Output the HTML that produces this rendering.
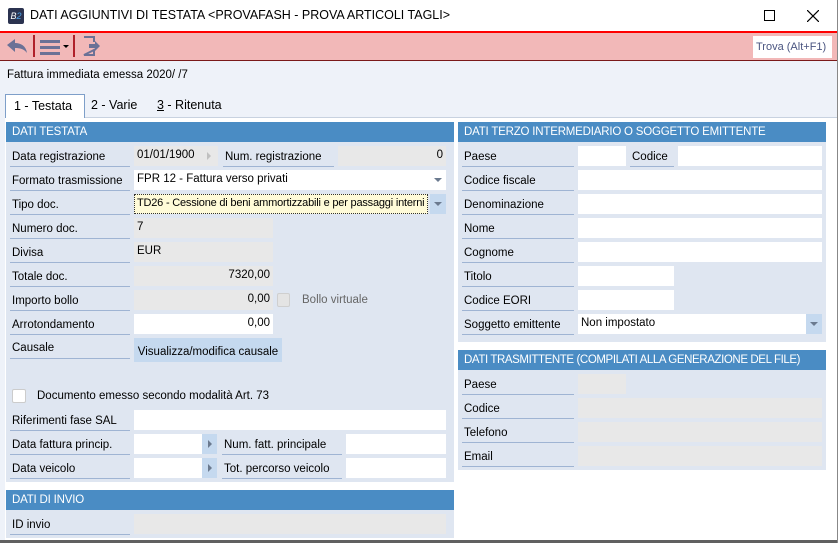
<!DOCTYPE html>
<html><head><meta charset="utf-8"><style>
*{box-sizing:border-box;margin:0;padding:0}
body{width:838px;height:543px;overflow:hidden;background:#eef2f9;font-family:"Liberation Sans",sans-serif;font-size:11.5px;color:#000;position:relative;white-space:nowrap}
.a{position:absolute}
.lbl{position:absolute;height:21px;line-height:23px;padding-left:2px;border-bottom:1px solid #9fb4d3;white-space:nowrap;overflow:hidden}
.f{position:absolute;height:20px;line-height:19px;padding:0 3px;white-space:nowrap;background:#fff;overflow:hidden}
.g{background:#e8e8e8}
.r{text-align:right}
.btn{position:absolute;height:20px;width:16px;background:#c5d9ef}
.btn:after{content:"";position:absolute;left:4px;top:8px;border-left:4px solid transparent;border-right:4px solid transparent;border-top:4px solid #6b7a8f}
.arr{position:absolute;height:20px;width:15px;background:#c5d9ef}
.arr:after{content:"";position:absolute;left:6px;top:6px;border-top:4px solid transparent;border-bottom:4px solid transparent;border-left:4px solid #6b7a8f}
.hdr{position:absolute;height:20px;background:#4a8cc4;color:#fff;line-height:21px;padding-left:6px;white-space:nowrap;overflow:hidden;letter-spacing:-0.2px}
.pan{position:absolute;background:#dfe6f1}
</style></head><body>
<div class="a" style="left:0;top:0;width:838px;height:31px;background:#fff"></div>
<div class="a" style="left:8px;top:8px;width:16px;height:16px;background:#2b3350;border-radius:2px;color:#fff;font-size:9px;line-height:16px;text-align:center;font-style:italic">B<span style="color:#4fa3e8">2</span></div>
<div class="a" style="left:30px;top:8px;font-size:12.5px">DATI AGGIUNTIVI DI TESTATA &lt;PROVAFASH - PROVA ARTICOLI TAGLI&gt;</div>
<div class="a" style="left:764px;top:10px;width:11px;height:11px;border:1px solid #000"></div>
<svg class="a" style="left:807px;top:10px" width="12" height="12"><path d="M0 0L12 12M12 0L0 12" stroke="#000" stroke-width="1.2"/></svg>
<div class="a" style="left:0;top:31px;width:838px;height:30px;background:#f2b8b8;border-top:2px solid #f00;border-bottom:1px solid #7a1a1a;border-right:1px solid #7a1a1a"></div>
<svg class="a" style="left:5px;top:37px" width="24" height="18"><path d="M2 8L10 2V6C16 6 21 9 22 16C19 12 15 11 10 11V15Z" fill="#6b7196"/></svg>
<div class="a" style="left:33px;top:35px;width:2px;height:22px;background:#b0202a"></div>
<div class="a" style="left:40px;top:40px;width:20px;height:3px;background:#6b7196;box-shadow:0 6px 0 #6b7196,0 12px 0 #6b7196"></div>
<div class="a" style="left:63px;top:45px;border-left:3px solid transparent;border-right:3px solid transparent;border-top:3px solid #000"></div>
<div class="a" style="left:73px;top:35px;width:2px;height:22px;background:#b0202a"></div>
<svg class="a" style="left:81px;top:35px" width="22" height="22"><path d="M3 2H13V7M13 15V20H3Z" fill="none" stroke="#6b7196" stroke-width="2"/><path d="M8 9H14V6L19 11L14 16V13H8Z" fill="#6b7196"/></svg>
<div class="a" style="left:753px;top:36px;width:79px;height:22px;background:#fff;color:#4a5580;line-height:22px;padding-left:3px;font-size:11px;white-space:nowrap">Trova (Alt+F1)</div>
<div class="a" style="left:7px;top:69px">Fattura immediata emessa 2020/ /7</div>
<div class="a" style="left:5px;top:117px;width:833px;height:423px;background:#fff;border-top:1px solid #c8d2e0"></div>
<div class="a" style="left:5px;top:94px;width:80px;height:24px;background:#fff;border:1px solid #7e9fc9;border-bottom:none;font-size:12.5px;line-height:22px;padding-left:8px">1 - Testata</div>
<div class="a" style="left:91px;top:98px;font-size:12.5px">2 - Varie</div>
<div class="a" style="left:157px;top:98px;font-size:12.5px"><u>3</u> - Ritenuta</div>
<div class="a" style="left:0;top:540px;width:838px;height:3px;background:#606060"></div>
<div class="a" style="left:837px;top:0;width:1px;height:543px;background:#888"></div>

<!-- left panel -->
<div class="pan" style="left:6px;top:122px;width:448px;height:360px"></div>
<div class="hdr" style="left:6px;top:122px;width:448px">DATI TESTATA</div>
<div class="lbl" style="left:10px;top:146px;width:120px">Data registrazione</div>
<div class="f g" style="left:134px;top:146px;width:84px">01/01/1900</div>
<div class="a" style="left:207px;top:152px;border-top:4px solid transparent;border-bottom:4px solid transparent;border-left:4px solid #c0c0c0"></div>
<div class="lbl" style="left:223px;top:146px;width:111px">Num. registrazione</div>
<div class="f g r" style="left:338px;top:146px;width:108px">0</div>
<div class="lbl" style="left:10px;top:170px;width:120px">Formato trasmissione</div>
<div class="f" style="left:134px;top:170px;width:296px">FPR 12 - Fattura verso privati</div>
<div class="btn" style="left:430px;top:170px;background:#fff"></div>
<div class="lbl" style="left:10px;top:194px;width:120px">Tipo doc.</div>
<div class="f" style="left:134px;top:194px;width:294px;background:#fffbd8;border:1px dotted #333;line-height:17px;padding-left:2px;font-size:11px;letter-spacing:-0.2px">TD26 - Cessione di beni ammortizzabili e per passaggi interni</div>
<div class="btn" style="left:430px;top:194px"></div>
<div class="lbl" style="left:10px;top:218px;width:120px">Numero doc.</div>
<div class="f g" style="left:134px;top:218px;width:139px">7</div>
<div class="lbl" style="left:10px;top:242px;width:120px">Divisa</div>
<div class="f g" style="left:134px;top:242px;width:139px">EUR</div>
<div class="lbl" style="left:10px;top:266px;width:120px">Totale doc.</div>
<div class="f g r" style="left:134px;top:266px;width:139px">7320,00</div>
<div class="lbl" style="left:10px;top:290px;width:120px">Importo bollo</div>
<div class="f g r" style="left:134px;top:290px;width:139px">0,00</div>
<div class="a" style="left:277px;top:293px;width:13px;height:14px;background:#e4e4e4;border:1px solid #cfcfcf;border-radius:2px"></div>
<div class="a" style="left:302px;top:294px;color:#666">Bollo virtuale</div>
<div class="lbl" style="left:10px;top:314px;width:120px">Arrotondamento</div>
<div class="f r" style="left:134px;top:314px;width:139px">0,00</div>
<div class="lbl" style="left:10px;top:338px;width:120px;line-height:21px">Causale</div>
<div class="a" style="left:134px;top:338px;width:148px;height:24px;background:#c5d9ef;text-align:center;line-height:28px">Visualizza/modifica causale</div>
<div class="a" style="left:12px;top:389px;width:14px;height:14px;background:#fff;border:1px solid #ccc;border-radius:2px"></div>
<div class="a" style="left:37px;top:390px">Documento emesso secondo modalità Art. 73</div>
<div class="lbl" style="left:10px;top:410px;width:120px">Riferimenti fase SAL</div>
<div class="f" style="left:134px;top:410px;width:312px"></div>
<div class="lbl" style="left:10px;top:434px;width:120px">Data fattura princip.</div>
<div class="f" style="left:134px;top:434px;width:68px"></div>
<div class="arr" style="left:202px;top:434px"></div>
<div class="lbl" style="left:222px;top:434px;width:120px">Num. fatt. principale</div>
<div class="f" style="left:346px;top:434px;width:100px"></div>
<div class="lbl" style="left:10px;top:458px;width:120px">Data veicolo</div>
<div class="f" style="left:134px;top:458px;width:68px"></div>
<div class="arr" style="left:202px;top:458px"></div>
<div class="lbl" style="left:222px;top:458px;width:120px">Tot. percorso veicolo</div>
<div class="f" style="left:346px;top:458px;width:100px"></div>

<div class="pan" style="left:6px;top:490px;width:448px;height:48px"></div>
<div class="hdr" style="left:6px;top:490px;width:448px">DATI DI INVIO</div>
<div class="lbl" style="left:10px;top:514px;width:120px">ID invio</div>
<div class="f g" style="left:134px;top:514px;width:312px"></div>

<!-- right panel -->
<div class="pan" style="left:458px;top:122px;width:368px;height:220px"></div>
<div class="hdr" style="left:458px;top:122px;width:368px">DATI TERZO INTERMEDIARIO O SOGGETTO EMITTENTE</div>
<div class="lbl" style="left:462px;top:146px;width:112px">Paese</div>
<div class="f" style="left:578px;top:146px;width:48px"></div>
<div class="lbl" style="left:630px;top:146px;width:44px">Codice</div>
<div class="f" style="left:678px;top:146px;width:144px"></div>
<div class="lbl" style="left:462px;top:170px;width:112px">Codice fiscale</div>
<div class="f" style="left:578px;top:170px;width:244px"></div>
<div class="lbl" style="left:462px;top:194px;width:112px">Denominazione</div>
<div class="f" style="left:578px;top:194px;width:244px"></div>
<div class="lbl" style="left:462px;top:218px;width:112px">Nome</div>
<div class="f" style="left:578px;top:218px;width:244px"></div>
<div class="lbl" style="left:462px;top:242px;width:112px">Cognome</div>
<div class="f" style="left:578px;top:242px;width:244px"></div>
<div class="lbl" style="left:462px;top:266px;width:112px">Titolo</div>
<div class="f" style="left:578px;top:266px;width:96px"></div>
<div class="lbl" style="left:462px;top:290px;width:112px">Codice EORI</div>
<div class="f" style="left:578px;top:290px;width:96px"></div>
<div class="lbl" style="left:462px;top:314px;width:112px">Soggetto emittente</div>
<div class="f" style="left:578px;top:314px;width:228px">Non impostato</div>
<div class="btn" style="left:806px;top:314px"></div>

<div class="pan" style="left:458px;top:350px;width:368px;height:120px"></div>
<div class="hdr" style="left:458px;top:350px;width:368px;letter-spacing:-0.4px">DATI TRASMITTENTE (COMPILATI ALLA GENERAZIONE DEL FILE)</div>
<div class="lbl" style="left:462px;top:374px;width:112px">Paese</div>
<div class="f g" style="left:578px;top:374px;width:48px"></div>
<div class="lbl" style="left:462px;top:398px;width:112px">Codice</div>
<div class="f g" style="left:578px;top:398px;width:244px"></div>
<div class="lbl" style="left:462px;top:422px;width:112px">Telefono</div>
<div class="f g" style="left:578px;top:422px;width:244px"></div>
<div class="lbl" style="left:462px;top:446px;width:112px">Email</div>
<div class="f g" style="left:578px;top:446px;width:244px"></div>
</body></html>
